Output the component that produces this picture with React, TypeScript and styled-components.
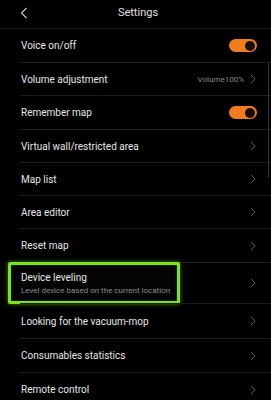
import React from "react";
import styled, { createGlobalStyle } from "styled-components";

const Global = createGlobalStyle`
  html, body { margin: 0; padding: 0; background: #000; }
  body { font-family: Roboto, "Noto Sans", "Liberation Sans", sans-serif; -webkit-font-smoothing: antialiased; }
`;

const Screen = styled.div`
  position: relative;
  width: 271px;
  height: 400px;
  overflow: hidden;
  background: #000;
  color: #e6e6e6;
`;

const Header = styled.div`
  position: relative;
  height: 29px;
  display: flex;
  align-items: center;
  justify-content: center;
  border-bottom: 1px solid #1c1c1c;
  box-sizing: border-box;
`;

const Back = styled.div`
  position: absolute;
  left: 20px;
  top: 7px;
  width: 8px;
  height: 12px;
  display: flex;
`;

const Title = styled.div`
  font-size: 11px;
  color: #e2e2e2;
  margin-left: 5px;
  margin-top: -3px;
`;

const List = styled.div`
  display: flex;
  flex-direction: column;
`;

const Row = styled.div<{ $h: number; $first?: boolean }>`
  position: relative;
  height: ${(p) => p.$h}px;
  margin-left: 20px;
  padding-left: 1px;
  padding-right: 15px;
  display: flex;
  align-items: center;
  justify-content: space-between;
  border-top: ${(p) => (p.$first ? "none" : "1px solid #1c1c1c")};
  box-sizing: border-box;
`;

const Texts = styled.div`
  display: flex;
  flex-direction: column;
  gap: 3px;
`;

const Label = styled.div`
  font-size: 10px;
  color: #e6e6e6;
  white-space: nowrap;
`;

const Sub = styled.div`
  font-size: 8px;
  color: #8c8c8c;
  white-space: nowrap;
`;

const Right = styled.div`
  display: flex;
  align-items: center;
  gap: 6px;
`;

const Value = styled.div`
  font-size: 8px;
  color: #8a8a8a;
`;

const Toggle = styled.div`
  width: 28px;
  height: 13px;
  border-radius: 7px;
  background: #f07c1e;
  position: relative;
  margin-right: -1px;
  &::after {
    content: "";
    position: absolute;
    right: 2px;
    top: 1.5px;
    width: 10px;
    height: 10px;
    border-radius: 50%;
    background: #150d08;
  }
`;

const Highlight = styled.div`
  position: absolute;
  left: -12px;
  top: -1px;
  width: 172px;
  height: 42px;
  box-sizing: border-box;
  border: 3px solid #7ee21c;
  border-radius: 2px;
  box-shadow: 0 0 4px rgba(126, 226, 28, 0.6), inset 0 0 2px rgba(126, 226, 28, 0.4);
  background: #050505;
  z-index: 0;
`;

const HighlightGlowAbove = styled.div`
  position: relative;
  z-index: 1;
`;

const Scrollbar = styled.div`
  position: absolute;
  right: 2px;
  top: 63px;
  width: 1px;
  height: 115px;
  background: #333;
`;

const Chevron = () => (
  <svg width="6" height="10" viewBox="0 0 6 10">
    <polyline points="1,1 5,5 1,9" fill="none" stroke="#5e5e5e" strokeWidth="1" />
  </svg>
);

type Item = {
  label: string;
  sub?: string;
  toggle?: boolean;
  value?: string;
  h: number;
};

const items: Item[] = [
  { label: "Voice on/off", toggle: true, h: 33 },
  { label: "Volume adjustment", value: "Volume100%", h: 33 },
  { label: "Remember map", toggle: true, h: 34 },
  { label: "Virtual wall/restricted area", h: 33 },
  { label: "Map list", h: 33 },
  { label: "Area editor", h: 33 },
  { label: "Reset map", h: 34 },
  { label: "Device leveling", sub: "Level device based on the current location", h: 41 },
  { label: "Looking for the vacuum-mop", h: 35 },
  { label: "Consumables statistics", h: 34 },
  { label: "Remote control", h: 34 },
];

export default function App() {
  return (
    <>
      <Global />
      <Screen>
        <Header>
          <Back>
            <svg width="8" height="12" viewBox="0 0 8 12">
              <polyline points="6.5,1 1.5,6 6.5,11" fill="none" stroke="#cfcfcf" strokeWidth="1.1" />
            </svg>
          </Back>
          <Title>Settings</Title>
        </Header>
        <List>
          {items.map((it, i) => (
            <Row key={it.label} $h={it.h} $first={i === 0}>
              {it.sub && <Highlight />}
              <HighlightGlowAbove>
                <Texts>
                  <Label>{it.label}</Label>
                  {it.sub && <Sub>{it.sub}</Sub>}
                </Texts>
              </HighlightGlowAbove>
              <Right>
                {it.value && <Value>{it.value}</Value>}
                {it.toggle ? <Toggle /> : <Chevron />}
              </Right>
            </Row>
          ))}
        </List>
        <Scrollbar />
      </Screen>
    </>
  );
}
